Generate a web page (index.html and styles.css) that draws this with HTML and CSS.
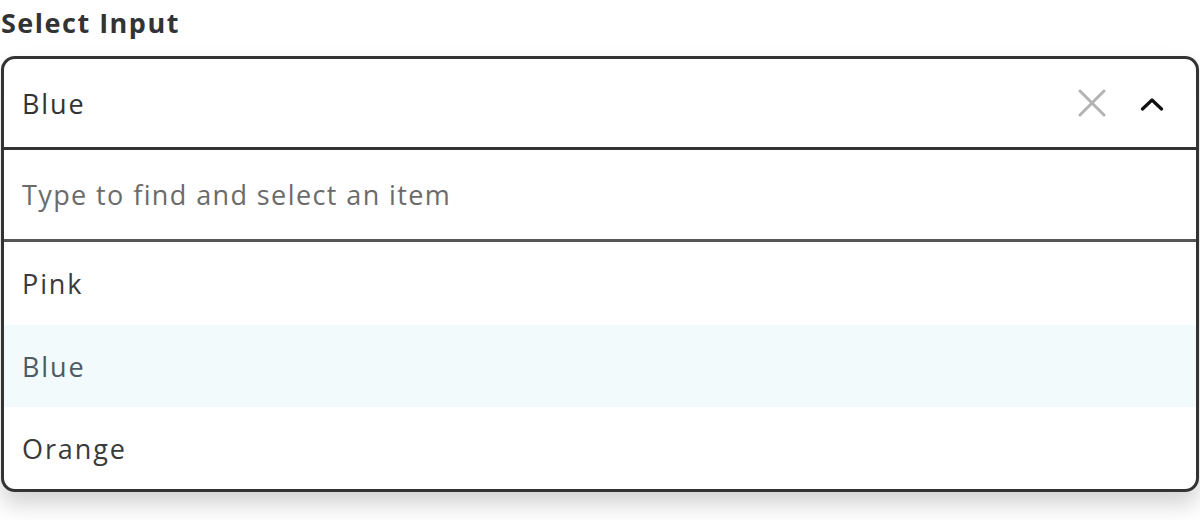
FILE: index.html
```html
<!DOCTYPE html>
<html lang="en">
<head>
<meta charset="utf-8">
<title>Select Input</title>
<link rel="stylesheet" href="styles.css">
</head>
<body>
<div class="page">
  <div class="label">Select Input</div>
  <div class="select">
    <div class="control">
      <span class="value">Blue</span>
      <span class="icons">
        <svg class="clear" width="28" height="28" viewBox="0 0 28 28"><path d="M2 2 L26 26 M26 2 L2 26" stroke="#b3b3b3" stroke-width="3" fill="none" stroke-linecap="round"/></svg>
        <svg class="chev" width="24" height="14" viewBox="0 0 24 14"><path d="M2.5 12 L12 3 L21.5 12" stroke="#111" stroke-width="3.2" fill="none" stroke-linecap="round" stroke-linejoin="round"/></svg>
      </span>
    </div>
    <div class="search">Type to find and select an item</div>
    <div class="options">
      <div class="option">Pink</div>
      <div class="option active">Blue</div>
      <div class="option">Orange</div>
    </div>
  </div>
</div>
</body>
</html>
```
FILE: styles.css
```css
html, body {
  margin: 0;
  padding: 0;
  background: #ffffff;
}
body {
  font-family: "Open Sans", "Noto Sans", sans-serif;
  color: #333333;
}
.page {
  padding: 5px 1px 0 1px;
  min-height: 520px;
  box-sizing: border-box;
}
.label {
  font-weight: 700;
  font-size: 27px;
  line-height: 36px;
  color: #333333;
  margin-bottom: 15px;
  letter-spacing: 1.5px;
}
.select {
  border: 3px solid #333333;
  border-radius: 14px;
  overflow: hidden;
  box-shadow: 0 12px 22px rgba(0, 0, 0, 0.18);
  background: #fff;
}
.control {
  height: 88px;
  display: flex;
  align-items: center;
  justify-content: space-between;
  padding: 0 32px 0 18px;
  border-bottom: 3px solid #333333;
  font-size: 27px;
  letter-spacing: 1.9px;
  font-weight: 400;
}
.icons {
  display: flex;
  align-items: center;
  gap: 34px;
}
.clear {
  display: block;
}
.chev {
  display: block;
  margin-top: 2px;
}
.search {
  height: 89px;
  display: flex;
  align-items: center;
  padding: 0 18px;
  border-bottom: 3px solid #555555;
  font-size: 27px;
  color: #6b6b6b;
  letter-spacing: 1.4px;
}
.option {
  height: 82px;
  display: flex;
  align-items: center;
  padding: 0 18px;
  font-size: 27px;
  color: #3a3a3a;
  letter-spacing: 1.9px;
}
.option:first-child {
  height: 83px;
}
.option.active {
  background: #f3fafc;
  color: #4d5b63;
}
```
